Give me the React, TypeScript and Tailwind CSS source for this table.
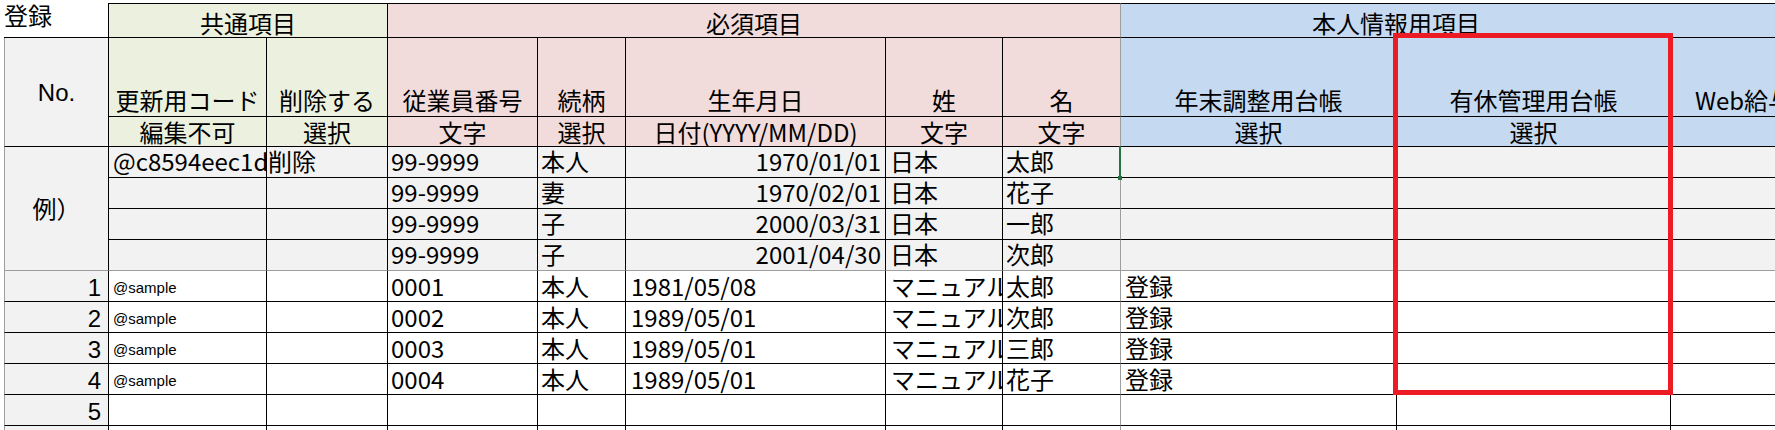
import React from "react";
import clsx from "clsx";
import { twMerge } from "tailwind-merge";

const JP = "font-['Noto_Sans_CJK_JP',sans-serif]";
const SANS = "font-['Liberation_Sans','Noto_Sans_CJK_JP',sans-serif]";

const GREEN = "bg-[#ebf1de]";
const PINK = "bg-[#f2dcdb]";
const BLUE = "bg-[#c5d9f1]";
const GRAY = "bg-[#f2f2f2]";

type CellProps = { className?: string; children?: React.ReactNode };

const Cell = ({ className, children }: CellProps) => (
  <div
    className={twMerge(
      "flex overflow-hidden whitespace-nowrap border-r border-b border-black text-[24px] leading-[24px] text-black",
      className
    )}
  >
    {children}
  </div>
);

const heads = [
  { top: "更新用コード", sub: "編集不可", bg: GREEN },
  { top: "削除する", sub: "選択", bg: GREEN },
  { top: "従業員番号", sub: "文字", bg: PINK },
  { top: "続柄", sub: "選択", bg: PINK },
  { top: "生年月日", sub: "日付(YYYY/MM/DD)", bg: PINK },
  { top: "姓", sub: "文字", bg: PINK },
  { top: "名", sub: "文字", bg: PINK, edge: true },
  { top: "年末調整用台帳", sub: "選択", bg: BLUE },
  { top: "有休管理用台帳", sub: "選択", bg: BLUE },
  { top: "Web給与明細用台帳", sub: "選択", bg: BLUE },
];

const examples = [
  ["@c8594eec1d1", "削除", "99-9999", "本人", "1970/01/01", "日本", "太郎"],
  ["", "", "99-9999", "妻", "1970/02/01", "日本", "花子"],
  ["", "", "99-9999", "子", "2000/03/31", "日本", "一郎"],
  ["", "", "99-9999", "子", "2001/04/30", "日本", "次郎"],
];

const rows = [
  { no: "1", code: "@sample", emp: "0001", rel: "本人", birth: "1981/05/08", last: "マニュアル", first: "太郎", nenmatsu: "登録" },
  { no: "2", code: "@sample", emp: "0002", rel: "本人", birth: "1989/05/01", last: "マニュアル", first: "次郎", nenmatsu: "登録" },
  { no: "3", code: "@sample", emp: "0003", rel: "本人", birth: "1989/05/01", last: "マニュアル", first: "三郎", nenmatsu: "登録" },
  { no: "4", code: "@sample", emp: "0004", rel: "本人", birth: "1989/05/01", last: "マニュアル", first: "花子", nenmatsu: "登録" },
  { no: "5", code: "", emp: "", rel: "", birth: "", last: "", first: "", nenmatsu: "" },
  { no: "", code: "", emp: "", rel: "", birth: "", last: "", first: "", nenmatsu: "" },
];

export default function App() {
  return (
    <div className={clsx("relative w-[1775px] h-[430px] overflow-hidden bg-white pt-[3px] pl-[4px]", JP)}>
      <div className="grid w-max grid-cols-[105px_158px_121px_150px_88px_260px_117px_118px_276px_274px_266px] grid-rows-[35px_79px_30px_repeat(10,31px)]">
        {/* row 1 : group headers */}
        <Cell className="items-start bg-white">登録</Cell>
        <Cell className={clsx("col-span-2 border-t items-end justify-center pb-[2px]", GREEN)}>共通項目</Cell>
        <Cell className={clsx("col-span-5 border-t border-r-[#9e9e9e] items-end justify-center pb-[2px]", PINK)}>
          必須項目
        </Cell>
        <Cell className={clsx("col-span-2 border-t border-r-0 items-end justify-center pb-[2px]", BLUE)}>
          本人情報用項目
        </Cell>
        <Cell className={clsx("border-t", BLUE)} />

        {/* row 2-3 : column labels */}
        <Cell className={clsx("row-span-2 border-l border-l-[#9e9e9e] items-center justify-center pt-[1px]", GRAY, SANS)}>
          No.
        </Cell>
        {heads.map((h) => (
          <Cell
            key={h.top}
            className={clsx("items-end justify-center pb-[4px]", h.bg, h.edge && "border-r-[#9e9e9e]")}
          >
            {h.top}
          </Cell>
        ))}
        {heads.map((h) => (
          <Cell
            key={h.top + "-sub"}
            className={clsx("items-center justify-center", h.bg, h.edge && "border-r-[#9e9e9e]")}
          >
            {h.sub}
          </Cell>
        ))}

        {/* example block */}
        <Cell className={clsx("row-span-4 border-l border-l-[#9e9e9e] border-b-[#9e9e9e] items-center justify-center pb-[2px]", GRAY)}>
          例）
        </Cell>
        {examples.map((r, i) => {
          const last = i === examples.length - 1 ? "border-b-[#9e9e9e]" : "";
          return (
            <React.Fragment key={i}>
              <Cell className={clsx("items-end pl-[4px] pb-[4px]", GRAY, last)}>{r[0]}</Cell>
              <Cell className={clsx("items-end pl-[1px] pb-[4px]", GRAY, last)}>{r[1]}</Cell>
              <Cell className={clsx("items-end pl-[3px] pb-[4px]", GRAY, last)}>{r[2]}</Cell>
              <Cell className={clsx("items-end pl-[3px] pb-[4px]", GRAY, last)}>{r[3]}</Cell>
              <Cell className={clsx("items-end justify-end pr-[4px] pb-[4px]", GRAY, last)}>{r[4]}</Cell>
              <Cell className={clsx("items-end pl-[4px] pb-[4px]", GRAY, last)}>{r[5]}</Cell>
              <Cell className={clsx("items-end pl-[3px] pb-[4px] border-r-[#9e9e9e]", GRAY, last)}>{r[6]}</Cell>
              <Cell className={clsx(GRAY, last)} />
              <Cell className={clsx(GRAY, last)} />
              <Cell className={clsx(GRAY, last)} />
            </React.Fragment>
          );
        })}

        {/* entry rows */}
        {rows.map((r, i) => (
          <React.Fragment key={i}>
            <Cell className={clsx("border-l border-l-[#9e9e9e] items-end justify-end pr-[7px] pb-[1px]", GRAY, SANS)}>
              {r.no}
            </Cell>
            <Cell className="items-end pl-[4px] pb-[6px] text-[15px] leading-[15px] font-['Liberation_Sans',sans-serif]">
              {r.code}
            </Cell>
            <Cell />
            <Cell className="items-end pl-[3px] pb-[3px]">{r.emp}</Cell>
            <Cell className="items-end pl-[3px] pb-[3px]">{r.rel}</Cell>
            <Cell className="items-end pl-[5px] pb-[3px]">{r.birth}</Cell>
            <Cell className="items-end pl-[5px] pb-[3px]">{r.last}</Cell>
            <Cell className="items-end pl-[3px] pb-[3px] border-r-[#9e9e9e]">{r.first}</Cell>
            <Cell className="items-end pl-[4px] pb-[3px]">{r.nenmatsu}</Cell>
            <Cell />
            <Cell />
          </React.Fragment>
        ))}
      </div>

      {/* active cell marker */}
      <div className="absolute left-[1119px] top-[146px] h-[32px] w-[2px] bg-[#217346]" />
      <div className="absolute left-[1118px] top-[176px] h-[4px] w-[4px] bg-[#217346]" />

      {/* red highlight */}
      <div className="pointer-events-none absolute left-[1393px] top-[33px] h-[362px] w-[280px] border-[5px] border-[#ed1c24]" />
    </div>
  );
}
